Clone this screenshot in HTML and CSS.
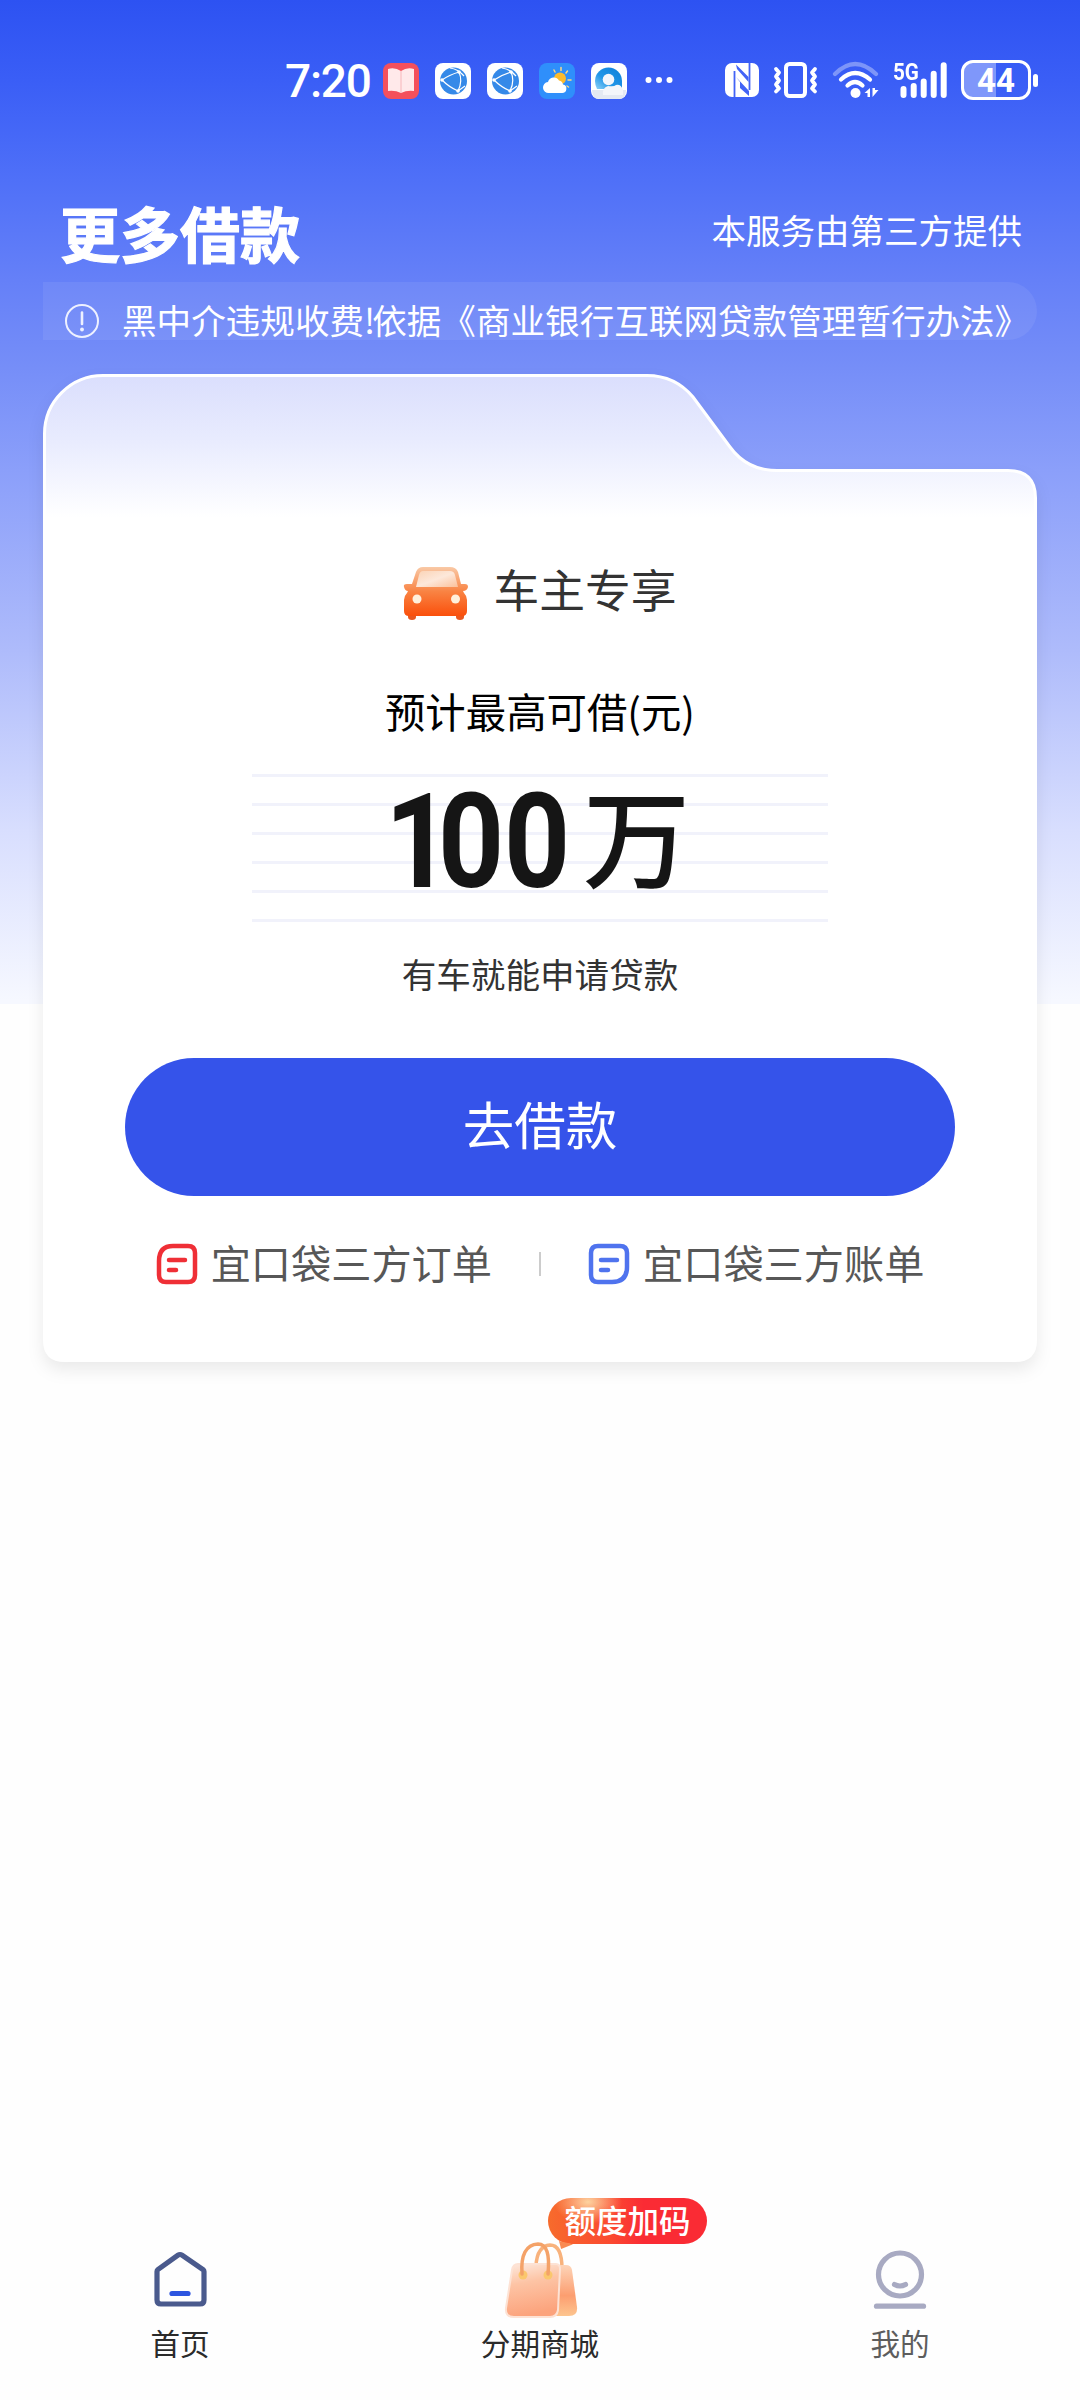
FILE: index.html
```html
<!DOCTYPE html>
<html lang="zh-CN">
<head>
<meta charset="utf-8">
<title>更多借款</title>
<link rel="stylesheet" href="styles.css">
</head>
<body>
<div class="app">
  <header class="status">
    <span class="clock">7:20</span>
    <div class="apps">
      <svg width="36" height="36" viewBox="0 0 36 36"><rect width="36" height="36" rx="8" fill="#f4505c"/><path d="M5 6q7-2 13 2 6-4 13-2v22q-7-1-13 2-6-3-13-2z" fill="#ffe9ea"/><path d="M18 8v22" stroke="#f7b6ba" stroke-width="1"/></svg>
      <svg width="36" height="36" viewBox="0 0 36 36"><rect width="36" height="36" rx="8" fill="#fff"/><circle cx="18.500" cy="18" r="13.500" fill="#3589e8"/><path d="M15 5q8 1 14 8M7 17Q14 12 24 9M24 9q4 9-1 19M7 17q7 7 16 11M23 28l7-5" fill="none" stroke="#fff" stroke-width="1.200"/><circle cx="24" cy="9" r="1.800" fill="#fff"/><circle cx="7" cy="17" r="1.800" fill="#fff"/><circle cx="23" cy="28" r="1.800" fill="#fff"/></svg>
      <svg width="36" height="36" viewBox="0 0 36 36"><rect width="36" height="36" rx="8" fill="#fff"/><circle cx="18.500" cy="18" r="13.500" fill="#3589e8"/><path d="M15 5q8 1 14 8M7 17Q14 12 24 9M24 9q4 9-1 19M7 17q7 7 16 11M23 28l7-5" fill="none" stroke="#fff" stroke-width="1.200"/><circle cx="24" cy="9" r="1.800" fill="#fff"/><circle cx="7" cy="17" r="1.800" fill="#fff"/><circle cx="23" cy="28" r="1.800" fill="#fff"/></svg>
      <svg width="36" height="36" viewBox="0 0 36 36"><rect width="36" height="36" rx="8" fill="#2f8ffb"/><circle cx="21" cy="15.500" r="6" fill="#fdbb2d"/><path d="M15 7l1 2M22 4.500v3M28.500 8l-1.500 2M29 17h3M28 23l1.500 1" stroke="#fcd988" stroke-width="1.500" stroke-linecap="round"/><path d="M10 30a5.500 5.500 0 0 1-1-11 6 6 0 0 1 11-1.500 5 5 0 0 1 4 4 4.300 4.300 0 0 1-1 8.500z" fill="#fff"/></svg>
      <svg width="36" height="36" viewBox="0 0 36 36"><defs><linearGradient id="ring" x1="0" y1="1" x2="1" y2="0"><stop offset="0" stop-color="#8fd3f8"/><stop offset=".4" stop-color="#2196e8"/><stop offset="1" stop-color="#0d7fd8"/></linearGradient></defs><rect width="36" height="36" rx="8" fill="#fff"/><path d="M1 27h34q0 9-8 9H9q-8 0-8-9z" fill="#e3e9f2"/><path d="M4 18a13.500 13.500 0 0 1 27 0v8H6q-2-4-2-8z" fill="url(#ring)"/><circle cx="17.500" cy="16.500" r="5.800" fill="#f2f6fc"/><path d="M12 32q-1-7 5-9 6 1 8-1 5-1 7 5v5z" fill="#f3f6fa"/></svg>
    </div>
    <svg class="dots" width="28" height="8" viewBox="0 0 28 8"><g fill="#fff"><circle cx="3.500" cy="4" r="3"/><circle cx="14" cy="4" r="3"/><circle cx="24.500" cy="4" r="3"/></g></svg>
    <svg class="nfc" width="34" height="34" viewBox="0 0 34 34"><rect width="34" height="34" rx="7" fill="#fff"/><path d="M9.500 8v26M24.500 0v27" fill="none" stroke="#4263f6" stroke-width="1.800"/><path d="M11 1.500L23.500 14v5L12 6zM11 14l13 14v5L15 25v-6z" fill="#4263f6"/></svg>
    <svg class="vibrate" width="45" height="38" viewBox="0 0 45 38"><g fill="none" stroke="#fff" stroke-width="4" stroke-linecap="round" stroke-linejoin="round"><rect x="13" y="3" width="19" height="32" rx="3.500"/><path stroke-width="3.800" d="M3 8l3 3.500-3 4 3 4-3 4 3 4-3 3M42 8l-3 3.500 3 4-3 4 3 4-3 4 3 3"/></g></svg>
    <svg class="wifi" width="48" height="38" viewBox="0 0 48 38"><g fill="none" stroke="#fff" stroke-width="4.200" stroke-linecap="round"><path opacity=".35" d="M3 13Q23-7 44 13"/><path d="M9 18.500Q23 5.500 38 18.500"/><path d="M15.500 24.500q7.500-7 15 0"/></g><circle cx="23.500" cy="32" r="5" fill="#fff"/><path d="M38 27v9h-2.500v-4h-3zM40.500 27v9l6-7h-3.500v-2z" fill="#fff"/></svg>
    <div class="signal">
      <span class="net">5G</span>
      <svg width="48" height="38" viewBox="0 0 48 38"><path d="M3.500 28v6M13.700 25v9M23.700 20.500V34M33.700 12.800V34M43.700 4.200V34" stroke="#fff" stroke-width="6" stroke-linecap="round"/></svg>
    </div>
    <div class="battery"><span>44</span></div>
  </header>

  <div class="heading">
    <h1>更多借款</h1>
    <p>本服务由第三方提供</p>
  </div>

  <div class="notice">
    <svg width="36" height="36" viewBox="0 0 36 36"><circle cx="18" cy="18" r="16" fill="none" stroke="#eef1ff" stroke-width="2"/><path d="M18 9.500v11.500" stroke="#eef1ff" stroke-width="2.600" stroke-linecap="round"/><circle cx="18" cy="26.500" r="1.900" fill="#eef1ff"/></svg>
    <span>黑中介违规收费<i>!</i>依据《商业银行互联网贷款管理暂行办法》</span>
  </div>

  <main class="card">
    <svg class="card-shape" width="994" height="988" viewBox="0 0 994 988">
      <defs><linearGradient id="sheet" x1="0" y1="0" x2="0" y2="988" gradientUnits="userSpaceOnUse"><stop offset="0" stop-color="#dadefd"/><stop offset=".07" stop-color="#e9ecfe"/><stop offset=".145" stop-color="#fff"/></linearGradient></defs>
      <path fill="url(#sheet)" stroke="#fff" stroke-width="3" d="M1.500 60A58.500 58.500 0 0 1 60 1.500H604Q632 1.500 650 23L687 73Q704 96.500 734 96.500H965Q992.500 96.500 992.500 124V966Q992.500 986.500 972 986.500H22Q1.500 986.500 1.500 966Z"/>
    </svg>
    <div class="product">
      <svg width="66" height="54" viewBox="0 0 66 54">
        <defs>
          <linearGradient id="car" x1="0" y1="0" x2="0" y2="1"><stop offset="0" stop-color="#f9c9a6"/><stop offset=".5" stop-color="#f98343"/><stop offset="1" stop-color="#fa4f0b"/></linearGradient>
          <linearGradient id="glass" x1="0" y1="0" x2="1" y2="1"><stop offset="0" stop-color="#fbd3b5"/><stop offset=".5" stop-color="#fde8da"/><stop offset="1" stop-color="#fbc09a"/></linearGradient>
        </defs>
        <path d="M5 44h8v6q0 3-4 3t-4-3zM53 44h8v6q0 3-4 3t-4-3z" fill="#e9571f"/>
        <path d="M1 20q-1-3 3-3h5L13 5q2-5 7-5h27q6 0 8 5l3 12h4q3 0 3 3-1 4-5 4l1 2q3 3 3 7v11q0 5-5 5H6q-5 0-5-5V33q0-4 3-7l1-2q-3 0-4-4z" fill="url(#car)"/>
        <path d="M20 4h27q4 0 5 4l3 12H13L16 8q1-4 4-4z" fill="url(#glass)"/>
        <circle cx="14" cy="32" r="4.500" fill="#fff0dc"/><circle cx="52.500" cy="32" r="4.500" fill="#fff0dc"/>
      </svg>
      <h2>车主专享</h2>
    </div>
    <p class="limit-label">预计最高可借(元)</p>
    <div class="limit"><span class="num"><i>1</i>00</span><span class="unit">万</span></div>
    <p class="hint">有车就能申请贷款</p>
    <button class="cta">去借款</button>
    <div class="links">
      <a class="link"><svg width="42" height="42" viewBox="0 0 42 42"><path d="M17 3H32q7 0 7 7V32q0 7-7 7H10q-7 0-7-7V18Q3 3 17 3z" fill="none" stroke="#ef2f36" stroke-width="4.500"/><path d="M13 17h16M13 27h7" stroke="#ef2f36" stroke-width="4.500" stroke-linecap="round"/></svg><span>宜口袋三方订单</span></a>
      <i class="divider"></i>
      <a class="link"><svg width="42" height="42" viewBox="0 0 42 42"><path d="M10 3H32q7 0 7 7V24Q39 39 24 39H10q-7 0-7-7V10q0-7 7-7z" fill="none" stroke="#4f73ee" stroke-width="4.500"/><path d="M13 17h16M13 27h7" stroke="#4f73ee" stroke-width="4.500" stroke-linecap="round"/></svg><span>宜口袋三方账单</span></a>
    </div>
  </main>

  <nav class="tabs">
    <a class="tab">
      <svg width="56" height="60" viewBox="0 0 56 60"><path d="M28 5.500q1 0 2 .700L51 20.500q1 .8 1 2V51q0 4-4 4H9q-4 0-4-4V22.500q0-1.200 1-2L26 6.200q1-.7 2-.7z" fill="none" stroke="#4a5a8d" stroke-width="5.200"/><path d="M20 44.500H36" stroke="#2d55e0" stroke-width="5.200" stroke-linecap="round"/></svg>
      <span>首页</span>
    </a>
    <a class="tab mall">
      <svg width="80" height="84" viewBox="0 0 80 84">
        <defs>
          <linearGradient id="bagfront" x1="0" y1="0" x2=".2" y2="1"><stop offset="0" stop-color="#fdeadf"/><stop offset=".4" stop-color="#fdc4a5"/><stop offset="1" stop-color="#fca37c"/></linearGradient>
          <linearGradient id="bagback" x1="0" y1="0" x2="0" y2="1"><stop offset="0" stop-color="#fdd4b8"/><stop offset=".6" stop-color="#fc9e70"/><stop offset="1" stop-color="#fdc58f"/></linearGradient>
        </defs>
        <path d="M36 27Q37 7 50 6q12 0 12 24" fill="none" stroke="#f8b27c" stroke-width="3.500"/>
        <path d="M30 26H66q5 0 6 5l5 37q1 9-8 9H34z" fill="url(#bagback)"/>
        <path d="M18 25H56q4 0 4 5l-2 41q-1 7-8 7H14q-9 0-8-9l6-38q1-6 6-6z" fill="url(#bagfront)" stroke="#fde2d4" stroke-width="2"/>
        <circle cx="23" cy="36" r="4.500" fill="#fbc76d"/><circle cx="48" cy="36" r="4.500" fill="#fbc76d"/>
        <path d="M22 35Q20 6 38 5q13 0 10 30" fill="none" stroke="#f4a268" stroke-width="3.500" stroke-linecap="round"/>
      </svg>
      <span>分期商城</span>
      <b class="badge">额度加码</b>
    </a>
    <a class="tab mine">
      <svg width="56" height="60" viewBox="0 0 56 60"><g fill="none" stroke="#a8aac2" stroke-width="5.200" stroke-linecap="round"><circle cx="28" cy="25.500" r="21.500"/><path d="M22.500 35.500q5.500 3 11 0"/><path d="M4.500 57.200H51.500"/></g></svg>
      <span>我的</span>
    </a>
  </nav>
</div>
</body>
</html>
```
FILE: styles.css
```css
* { box-sizing: border-box; margin: 0; padding: 0; }

body {
  background: #fefefe;
  font-family: "Noto Sans CJK SC", sans-serif;
  color: #333;
}

svg { display: block; flex: none; }
i { font-style: normal; }

.app {
  width: 1080px;
  height: 2400px;
  display: flex;
  flex-direction: column;
  background: linear-gradient(#2d52f2 0, #3a5ef6 80px, #4f70f8 180px, #6580f8 280px, #778ff8 374px, #8b9ffa 470px, #aebbfb 650px, #d8defe 830px, #f6f8ff 1000px) 0 0 / 100% 1004px no-repeat;
}

.status {
  height: 160px;
  padding: 0 40px 0 285px;
  display: flex;
  align-items: center;
  color: #fff;
}
.clock {
  font: 500 46px/50px Roboto, sans-serif;
  width: 98px;
  padding-top: 2px;
  letter-spacing: -1.2px;
}
.apps { display: flex; gap: 16px; padding-top: 2px; }
.dots { margin-left: 18px; }
.nfc { margin-left: 52px; }
.vibrate { margin-left: 14px; }
.wifi { margin-left: 14px; }
.signal { position: relative; margin-left: 20px; }
.net {
  position: absolute;
  left: -7px;
  top: 0;
  font: 700 24px/22px Roboto, sans-serif;
  transform: scaleX(.86);
  transform-origin: 0 0;
}
.battery {
  position: relative;
  width: 70px;
  height: 40px;
  margin-left: 13px;
  border: 3px solid #fff;
  border-radius: 12px;
  background: linear-gradient(90deg, #7f97fa 50%, transparent 50%);
  font: 700 33px/35px Roboto, sans-serif;
  text-align: center;
}
.battery::after {
  content: "";
  position: absolute;
  right: -10px;
  top: 11px;
  width: 5px;
  height: 13px;
  border-radius: 3px;
  background: #fff;
}

.heading {
  height: 122px;
  padding: 0 58px 0 60px;
  display: flex;
  justify-content: space-between;
  color: #fff;
}
.heading h1 {
  font-size: 60px;
  line-height: 88px;
  font-weight: 700;
  padding-top: 28px;
  -webkit-text-stroke: 1.2px #fff;
}
.heading p { font-size: 34.5px; line-height: 50px; padding-top: 44px; }

.notice {
  width: 994px;
  height: 58px;
  margin-left: 43px;
  padding: 15px 0 0 21px;
  display: flex;
  align-items: center;
  gap: 22px;
  border-radius: 0 29px 29px 0;
  background: rgba(255, 255, 255, .07);
  color: #fff;
  font-size: 34.6px;
  line-height: 40px;
  white-space: nowrap;
}
.notice svg { margin-top: 5px; }
.notice i { letter-spacing: -3px; }

.card {
  position: relative;
  width: 994px;
  height: 988px;
  margin: 34px 0 0 43px;
  padding-top: 180px;
  display: flex;
  flex-direction: column;
  align-items: center;
}
.card > * { position: relative; }
.card > .card-shape {
  position: absolute;
  left: 0;
  top: 0;
  filter: drop-shadow(0 8px 8px rgba(0, 0, 0, .08));
}
.product { height: 76px; display: flex; align-items: center; gap: 24px; }
.product svg { margin-top: 3px; }
.product h2 { font-size: 45.8px; line-height: 70px; padding-bottom: 8px; font-weight: 400; }
.limit-label {
  height: 60px;
  margin-top: 51px;
  font-size: 40.4px;
  line-height: 60px;
  color: #000;
}
.limit {
  width: 576px;
  height: 149px;
  margin-top: 33px;
  padding-left: 133px;
  display: flex;
  color: #151515;
  background: repeating-linear-gradient(#f1f2fb 0 3px, transparent 3px 29.1px);
}
.num {
  width: 198px;
  font: 700 131px/136px Roboto, sans-serif;
  letter-spacing: 0;
  transform: scaleX(.88);
  transform-origin: 0 0;
}
.num i { letter-spacing: -15px; }
.unit { font-size: 107px; line-height: 120px; font-weight: 500; }
.hint { margin-top: 25px; font-size: 34.6px; line-height: 50px; }
.cta {
  width: 830px;
  height: 138px;
  margin-top: 60px;
  padding-bottom: 9px;
  border: 0;
  border-radius: 69px;
  background: #3553ea;
  color: #fff;
  font: 400 51.5px/126px "Noto Sans CJK SC", sans-serif;
}
.links {
  margin-top: 38px;
  height: 60px;
  display: flex;
  align-items: center;
  font-size: 40.2px;
  line-height: 56px;
  color: #575757;
}
.link { display: flex; align-items: center; gap: 13px; }
.link span { padding-bottom: 4px; }
.divider { width: 2px; height: 24px; margin: 0 47px; background: #ccc; }

.tabs {
  margin-top: auto;
  height: 160px;
  display: flex;
}
.tab {
  position: relative;
  flex: 1;
  height: 123px;
  display: flex;
  flex-direction: column;
  align-items: center;
  justify-content: flex-end;
  font-size: 29.6px;
  line-height: 40px;
  color: #2b2b2b;
}
.tab svg { margin-bottom: 14px; }
.mall svg { margin-bottom: 0; }
.mine { color: #5d5d5d; }
.badge {
  position: absolute;
  left: 188px;
  top: -42px;
  width: 159px;
  height: 46px;
  border-radius: 23px;
  background: radial-gradient(ellipse 34px 22px at 40px 4px, #fdd3a0, rgba(253, 160, 90, 0)), linear-gradient(90deg, #f76b2c, #fb4930 40%, #fa2b34 60%);
  color: #fff;
  font-size: 31.5px;
  line-height: 42px;
  font-weight: 500;
  text-align: center;
}
.badge::before {
  content: "";
  position: absolute;
  left: 11px;
  bottom: -5px;
  width: 14px;
  height: 8px;
  background: #f98a52;
  clip-path: polygon(0 0, 100% 40%, 15% 100%);
}
```
